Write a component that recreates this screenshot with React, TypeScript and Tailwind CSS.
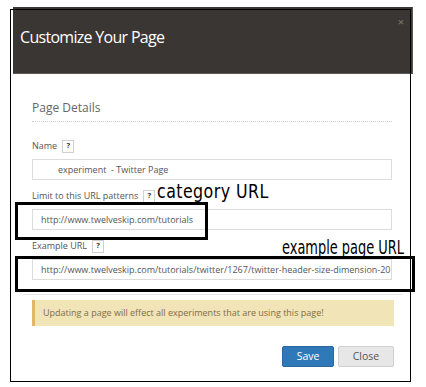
import React from 'react';

const HelpBadge: React.FC = () => (
  <span className="ml-[5px] inline-flex h-[13px] w-[12px] items-center justify-center border border-[#d0d0d0] bg-white text-[7.5px] font-bold leading-none text-[#333]">
    ?
  </span>
);

const Field: React.FC<{ label: string; value: string; indent?: boolean }> = ({ label, value, indent }) => (
  <div className="flex flex-col">
    <div className="flex h-[12px] items-center text-[9px] text-[#555]">
      {label}
      <HelpBadge />
    </div>
    <div
      className={`mt-[7px] flex h-[21px] items-center overflow-hidden whitespace-pre border border-[#dcdcdc] bg-white text-[9px] text-[#555] ${
        indent ? 'pl-[25px]' : 'pl-[8px]'
      }`}
    >
      {value}
    </div>
  </div>
);

const App: React.FC = () => {
  return (
    <div className="relative h-[387px] w-[426px] overflow-hidden bg-white font-['Open_Sans',sans-serif]">
      {/* Modal */}
      <div className="ml-[13px] mt-[7px] w-[400px]">
        {/* Header */}
        <div className="relative h-[67px] border-b border-r border-[#5b5754] bg-[#3a3633] pl-[7px] pt-[19px]">
          <h2 className="text-[16px] font-normal leading-[22px] tracking-[-0.7px] text-white">Customize Your Page</h2>
          <span className="absolute right-[8px] top-[9px] text-[11px] font-bold leading-none text-[#6d6a67]">×</span>
        </div>

        {/* Body */}
        <div className="pl-[19px] pr-[21px] pt-[26px]">
          <div className="h-[22px] border-b border-dotted border-[#cfcfcf] text-[12px] leading-[16px] text-[#666]">Page Details</div>

          <div className="mt-[18px] flex flex-col gap-[10px]">
            <Field label="Name" value="experiment  - Twitter Page" indent />
            <Field label="Limit to this URL patterns" value="http://www.twelveskip.com/tutorials" />
            <Field label="Example URL" value="http://www.twelveskip.com/tutorials/twitter/1267/twitter-header-size-dimension-2015" />
          </div>
        </div>

        {/* Footer */}
        <div className="mx-[10px] mt-[14px] border-t border-[#e8e8e8] px-[9px] pt-[5px]">
          <div className="flex h-[26px] items-center border-l-[3px] border-[#e2b663] bg-[#f1e4b6] pl-[8px] text-[9px] text-[#7f6d4a]">
            Updating a page will effect all experiments that are using this page!
          </div>
          <div className="mt-[20px] flex justify-end gap-[4px]">
            <button className="h-[21px] w-[52px] rounded-[2px] border border-[#2a67a0] bg-[#3079b9] text-[10.5px] text-white">
              Save
            </button>
            <button className="h-[21px] w-[56px] rounded-[2px] border border-[#cfcfcf] bg-[#e7e7e7] text-[10.5px] text-[#555]">
              Close
            </button>
          </div>
        </div>
      </div>

      {/* Screenshot annotations */}
      <div className="pointer-events-none absolute left-[10px] top-[9px] h-[373px] w-[401px] border border-black" />
      <div className="pointer-events-none absolute left-[15px] top-[202px] h-[38px] w-[193px] border-[3px] border-black" />
      <div className="pointer-events-none absolute left-[15px] top-[256px] h-[36px] w-[400px] border-[3px] border-black" />
      <span className="absolute left-[157px] top-[181px] origin-left whitespace-nowrap font-['DejaVu_Sans_Condensed',sans-serif] text-[20px] leading-none tracking-[0.5px] text-black [transform:scaleX(0.88)]">
        category URL
      </span>
      <span className="absolute left-[282px] top-[237px] origin-left whitespace-nowrap font-['DejaVu_Sans_Condensed',sans-serif] text-[20px] leading-none text-black [transform:scaleX(0.72)]">
        example page URL
      </span>
    </div>
  );
};

export default App;
